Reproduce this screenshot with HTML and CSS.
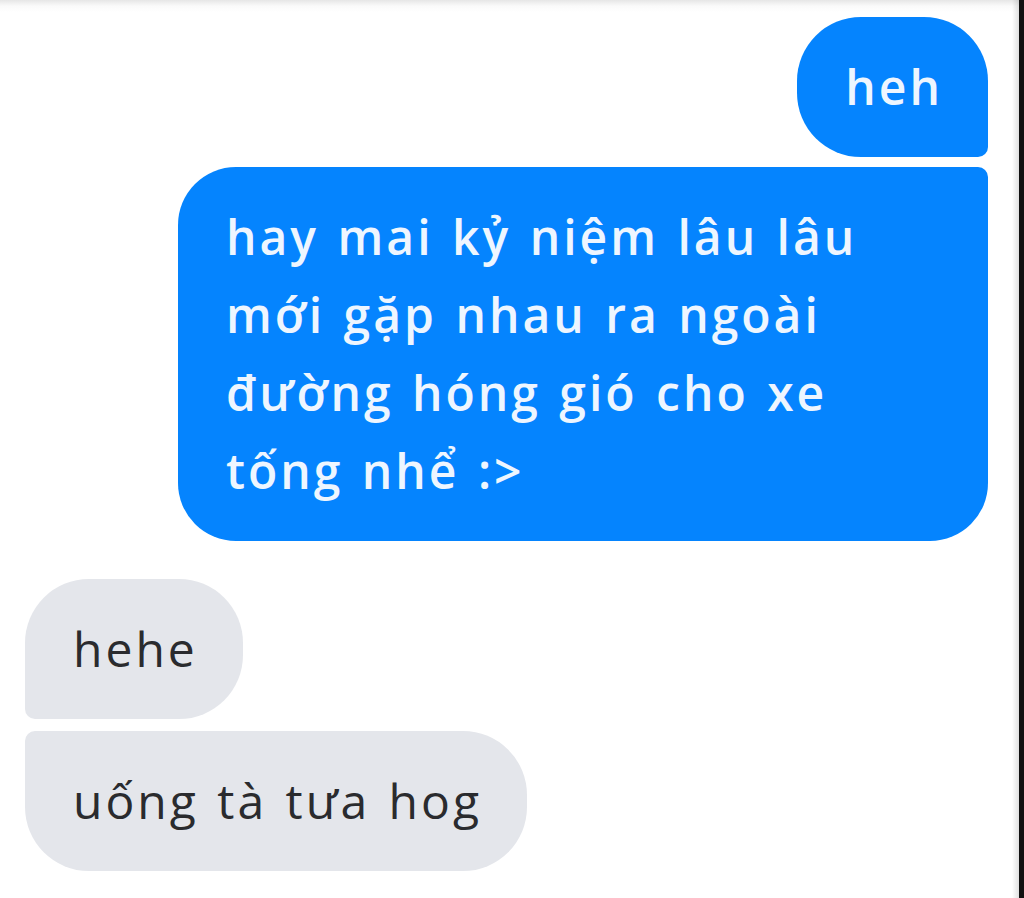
FILE: index.html
```html
<!DOCTYPE html>
<html lang="vi">
<head>
<meta charset="utf-8">
<title>Chat</title>
<link rel="stylesheet" href="styles.css">
</head>
<body>
<div class="frame">
  <div class="chat">
    <div class="msg out first">heh</div>
    <div class="msg out last wide">hay mai kỷ niệm lâu lâu<br>mới gặp nhau ra ngoài<br>đường hóng gió cho xe<br>tống nhể :&gt;</div>
    <div class="msg in first">hehe</div>
    <div class="msg in last">uống tà tưa hog</div>
  </div>
</div>
</body>
</html>
```
FILE: styles.css
```css
html, body {
  margin: 0;
  padding: 0;
  background: #ffffff;
}
.frame {
  width: 1024px;
  height: 898px;
  box-sizing: border-box;
  border-right: 5px solid #111;
  background: linear-gradient(to bottom, #e6e6e6 0, #fafafa 6px, #ffffff 12px);
  position: relative;
  overflow: hidden;
}
.frame::after {
  content: "";
  position: absolute;
  top: 0;
  right: 0;
  width: 7px;
  height: 100%;
  background: linear-gradient(to right, rgba(0,0,0,0), rgba(0,0,0,0.12));
}
.chat {
  display: flex;
  flex-direction: column;
  padding: 17px 31px 0 25px;
  font-family: "Open Sans", "DejaVu Sans", sans-serif;
  font-size: 48px;
  letter-spacing: 3px;
  word-spacing: 3px;
  line-height: 78px;
}
.msg {
  padding: 31px 45px 31px 48px;
  box-sizing: border-box;
}
.out {
  align-self: flex-end;
  background: #0584fe;
  color: #eef6ff;
  font-weight: 600;
}
.in {
  align-self: flex-start;
  background: #e4e6eb;
  color: #2a2b2e;
}
.out.first { border-radius: 64px 64px 10px 64px; }
.out.last { border-radius: 58px 10px 58px 58px; margin-top: 10px; }
.wide { width: 810px; }
.in.first { border-radius: 64px 64px 64px 10px; margin-top: 38px; }
.in.last { border-radius: 10px 64px 64px 64px; margin-top: 12px; }
```
